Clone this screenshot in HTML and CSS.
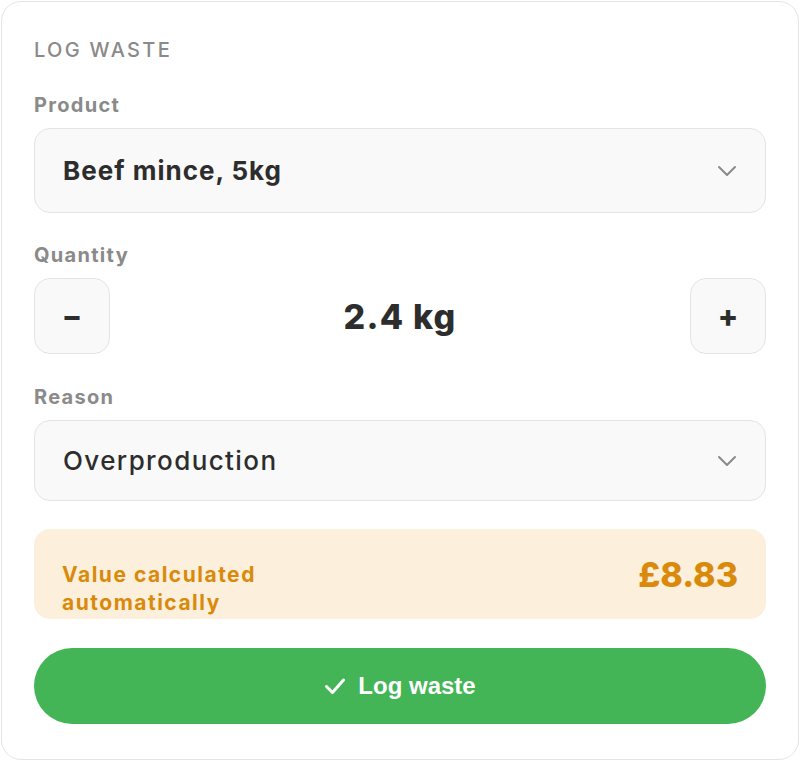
FILE: index.html
```html
<!DOCTYPE html>
<html lang="en">
<head>
    <meta charset="UTF-8">
    <meta name="viewport" content="width=device-width, initial-scale=1.0">
    <title>Log waste</title>
    <link rel="stylesheet" href="styles.css">
</head>
<body>
    <div class="card">
        <h2 class="card-title">LOG WASTE</h2>

        <label class="field-label">Product</label>
        <div class="select select-product">
            <span>Beef mince, 5kg</span>
            <svg class="chevron" width="20" height="12" viewBox="0 0 20 12"><path d="M2 2l8 8 8-8" fill="none" stroke="#8a8a8a" stroke-width="2" stroke-linecap="round" stroke-linejoin="round"/></svg>
        </div>

        <label class="field-label">Quantity</label>
        <div class="stepper">
            <button class="step-btn">&ndash;</button>
            <div class="qty">2.4 kg</div>
            <button class="step-btn">+</button>
        </div>

        <label class="field-label">Reason</label>
        <div class="select select-reason">
            <span>Overproduction</span>
            <svg class="chevron" width="20" height="12" viewBox="0 0 20 12"><path d="M2 2l8 8 8-8" fill="none" stroke="#8a8a8a" stroke-width="2" stroke-linecap="round" stroke-linejoin="round"/></svg>
        </div>

        <div class="value-box">
            <div class="value-note">Value calculated<br>automatically</div>
            <div class="value-amount">£8.83</div>
        </div>

        <button class="submit">
            <svg width="22" height="18" viewBox="0 0 22 18"><path d="M2.5 9.5l6 6L19.5 3" fill="none" stroke="#fff" stroke-width="3" stroke-linecap="round" stroke-linejoin="round"/></svg>
            Log waste
        </button>
    </div>
</body>
</html>
```

FILE: styles.css
```css
* { box-sizing: border-box; }
html, body { margin: 0; padding: 0; background: #fff; }
body {
    font-family: Inter, "Noto Sans", sans-serif;
    color: #2d2d2d;
}
.card {
    width: 798px;
    height: 759px;
    margin: 1px 0 0 1px;
    border: 1px solid #e4e4e4;
    border-radius: 20px;
    padding: 34px 32px 0;
    display: flex;
    flex-direction: column;
}
.card-title {
    margin: 0 0 28px;
    font-size: 20px;
    font-weight: 500;
    letter-spacing: 2.3px;
    color: #8a8a8a;
    line-height: 28px;
}
.field-label {
    font-size: 20px;
    font-weight: 700;
    letter-spacing: 1.3px;
    color: #8a8a8a;
    line-height: 26px;
    margin-bottom: 10px;
}
.select {
    display: flex;
    align-items: center;
    justify-content: space-between;
    background: #f9f9f9;
    border: 1.5px solid #e4e4e4;
    border-radius: 16px;
    padding: 0 28px;
    font-size: 26px;
    color: #2d2d2d;
}
.select-product { height: 85px; font-weight: 700; letter-spacing: 1px; margin-bottom: 29px; }
.select-reason { height: 81px; font-weight: 500; letter-spacing: 1.4px; margin-bottom: 28px; }
.stepper {
    display: flex;
    align-items: center;
    justify-content: space-between;
    margin-bottom: 30px;
}
.step-btn {
    width: 76px;
    height: 76px;
    border-radius: 16px;
    background: #f9f9f9;
    border: 1.5px solid #e4e4e4;
    font-family: Inter, "Noto Sans", sans-serif;
    font-size: 30px;
    font-weight: 800;
    color: #2d2d2d;
}
.qty {
    font-size: 34px;
    font-weight: 800;
    letter-spacing: 1.2px;
    color: #2d2d2d;
}
.value-box {
    height: 90px;
    background: #fcefdc;
    border-radius: 16px;
    padding: 32px 28px 0;
    display: flex;
    justify-content: space-between;
    align-items: flex-start;
    overflow: hidden;
    margin-bottom: 29px;
}
.value-note {
    font-size: 21px;
    font-weight: 700;
    letter-spacing: 1.5px;
    line-height: 28px;
    color: #d98a0b;
}
.value-amount {
    font-size: 34px;
    font-weight: 800;
    line-height: 40px;
    margin-top: -6px;
    color: #d98a0b;
}
.submit {
    height: 76px;
    border: none;
    border-radius: 38px;
    background: #43b556;
    color: #fff;
    font-family: "Liberation Sans", Arial, sans-serif;
    font-size: 24px;
    font-weight: 700;
    display: flex;
    align-items: center;
    justify-content: center;
    gap: 12px;
}
```
